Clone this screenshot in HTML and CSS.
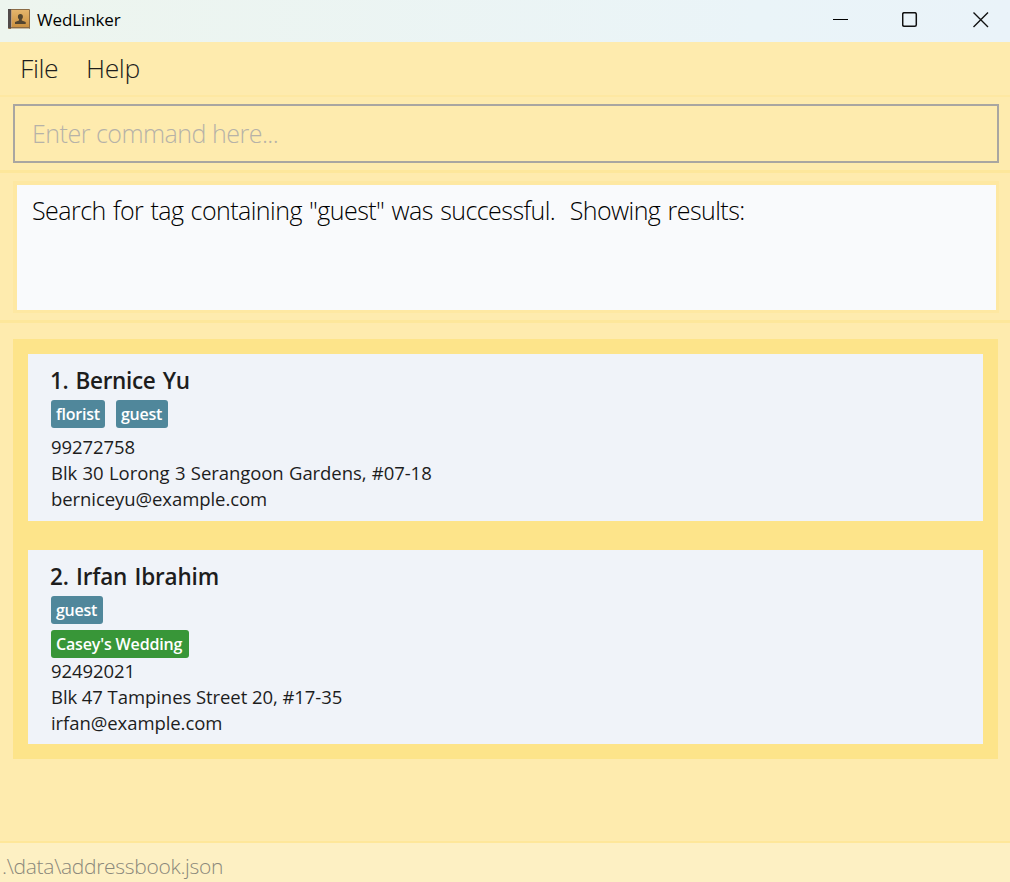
FILE: index.html
```html
<!DOCTYPE html>
<html lang="en">
<head>
<meta charset="utf-8">
<title>WedLinker</title>
<link rel="stylesheet" href="styles.css">
</head>
<body>
<div class="window">
  <header class="titlebar">
    <svg class="app-icon" width="24" height="24" viewBox="0 0 24 24">
      <defs><linearGradient id="cover" x1="0" y1="0" x2="0" y2="1"><stop offset="0" stop-color="#e5b56c"/><stop offset="1" stop-color="#ca903f"/></linearGradient></defs>
      <rect x="1" y="2" width="22" height="20" rx="1" fill="#8a6b45"/>
      <rect x="1" y="2" width="3" height="19" fill="#514a4a"/>
      <rect x="4" y="3" width="1" height="17" fill="#c3a078"/>
      <rect x="5" y="3" width="17" height="17" fill="url(#cover)"/>
      <path d="M4 21.500h18" stroke="#c9b9a0"/>
      <path d="M13.400 7c1.700 0 2.500 1 2.500 2.700 0 1.200-.5 2-1.100 2.600v1.300l3.900 1.500V17H8v-1.900l4-1.500v-1.300c-.7-.6-1.100-1.400-1.100-2.600 0-1.700.8-2.700 2.500-2.700z" fill="#53452f"/>
    </svg>
    <span class="title">WedLinker</span>
    <div class="controls">
      <svg width="16" height="16" viewBox="0 0 16 16"><path d="M0 7.500h15" stroke="#000"/></svg>
      <svg width="16" height="16" viewBox="0 0 16 16"><rect x=".7" y=".7" width="13.600" height="13.600" rx="1.500" fill="none" stroke="#111" stroke-width="1.500"/></svg>
      <svg width="16" height="16" viewBox="0 0 16 16"><path d="M.5.5l14.500 14.500M15 .5L.5 15" stroke="#111" stroke-width="1.400"/></svg>
    </div>
  </header>
  <nav class="menu"><span class="file">File</span><span class="help">Help</span></nav>
  <section class="command-pane"><div class="command"><span>Enter command here...</span></div></section>
  <section class="result-pane"><div class="result"><span>Search for tag containing "guest" was successful.&nbsp; Showing results:</span></div></section>
  <main class="list-pane">
    <div class="list">
      <article class="card first">
        <h2>1. Bernice Yu</h2>
        <div class="tags"><span class="tag florist">florist</span><span class="tag guest">guest</span></div>
        <p>99272758</p>
        <p class="address">Blk 30 Lorong 3 Serangoon Gardens, #07-18</p>
        <p>berniceyu@example.com</p>
      </article>
      <article class="card">
        <h2 class="wide">2. Irfan Ibrahim</h2>
        <div class="tags"><span class="tag guest">guest</span></div>
        <div class="tags last"><span class="tag wedding">Casey's Wedding</span></div>
        <p>92492021</p>
        <p>Blk 47 Tampines Street 20, #17-35</p>
        <p>irfan@example.com</p>
      </article>
    </div>
  </main>
  <footer class="status"><span>.\data\addressbook.json</span></footer>
</div>
</body>
</html>
```
FILE: styles.css
```css
* { box-sizing: border-box; }
body { margin: 0; font-family: "Open Sans", "Noto Sans", sans-serif; color: #1d1d1d; }
.window { width: 1010px; height: 882px; display: flex; flex-direction: column; background: #feebae; overflow: hidden; white-space: nowrap; }
.titlebar { flex: 0 0 42px; display: flex; align-items: flex-start; background: linear-gradient(90deg, #edf5ee, #eaf4f8 75%, #eaf3f9); }
.app-icon { margin: 7px 0 0 7px; }
.title { margin-left: 6px; font-size: 17px; line-height: 39px; letter-spacing: -.12px; color: #000; }
.controls { display: flex; gap: 54px; margin: 12px 21px 0 auto; }
.controls svg { display: block; }
.controls svg:nth-child(2) { margin: 0 1px 0 -1px; }
.menu { flex: 0 0 53px; padding-left: 20px; display: flex; font-size: 26.500px; font-weight: 300; line-height: 52px; }
.file { width: 66px; letter-spacing: -.4px; }
.help { letter-spacing: -.4px; }
.command-pane { flex: 0 0 75px; border-top: 2px solid #fee8a2; padding: 7px 11px 0 13px; }
.command { height: 59px; border: 2px solid #a9a6a1; padding-left: 17px; font-size: 25px; font-weight: 300; line-height: 54px; letter-spacing: -.5px; color: #b6b2a8; }
.result-pane { flex: 0 0 150px; border-top: 3px solid #fde79b; padding: 8px 11px 0 13px; }
.result { height: 132px; border: 4px solid #fee8a2; border-width: 4px 3px 3px 4px; background: #f9fafc; padding-left: 15px; font-size: 25px; font-weight: 300; line-height: 51px; letter-spacing: -.55px; word-spacing: 1.300px; color: #000; }
.list-pane { flex: 1; border-top: 3px solid #fde79b; border-bottom: 2px solid #fee79a; padding: 16px 12px 0 13px; }
.list { height: 420px; background: #fde48a; padding: 15px; display: flex; flex-direction: column; gap: 29px; }
.card { height: 194px; background: #f0f3f9; padding: 12px 23px 0; }
.first { height: 167px; }
.card h2 { margin: 0 0 4px -1px; height: 30px; line-height: 30px; font-size: 22.500px; font-weight: 600; letter-spacing: -.33px; word-spacing: 1.700px; }
.card .wide { letter-spacing: -.18px; }
.tags { display: flex; gap: 11px; height: 28px; margin-bottom: 6px; }
.last { margin-bottom: 0; }
.tag { background: #50879b; color: #fff; border-radius: 3px; padding-left: 5px; height: 28px; line-height: 28px; font-size: 16px; font-weight: 600; letter-spacing: -.25px; }
.florist { width: 54px; }
.guest { width: 52px; }
.wedding { width: 138px; background: #389638; letter-spacing: -.15px; }
.card p { margin: 0; height: 26px; line-height: 26px; font-size: 18.500px; letter-spacing: -.07px; }
.card .address { word-spacing: .7px; }
.status { flex: 0 0 39px; height: 39px; overflow: hidden; background: #fdf0c3; padding-left: 2px; font-size: 21px; font-weight: 300; line-height: 47px; letter-spacing: -.3px; color: #8b887b; }
```
